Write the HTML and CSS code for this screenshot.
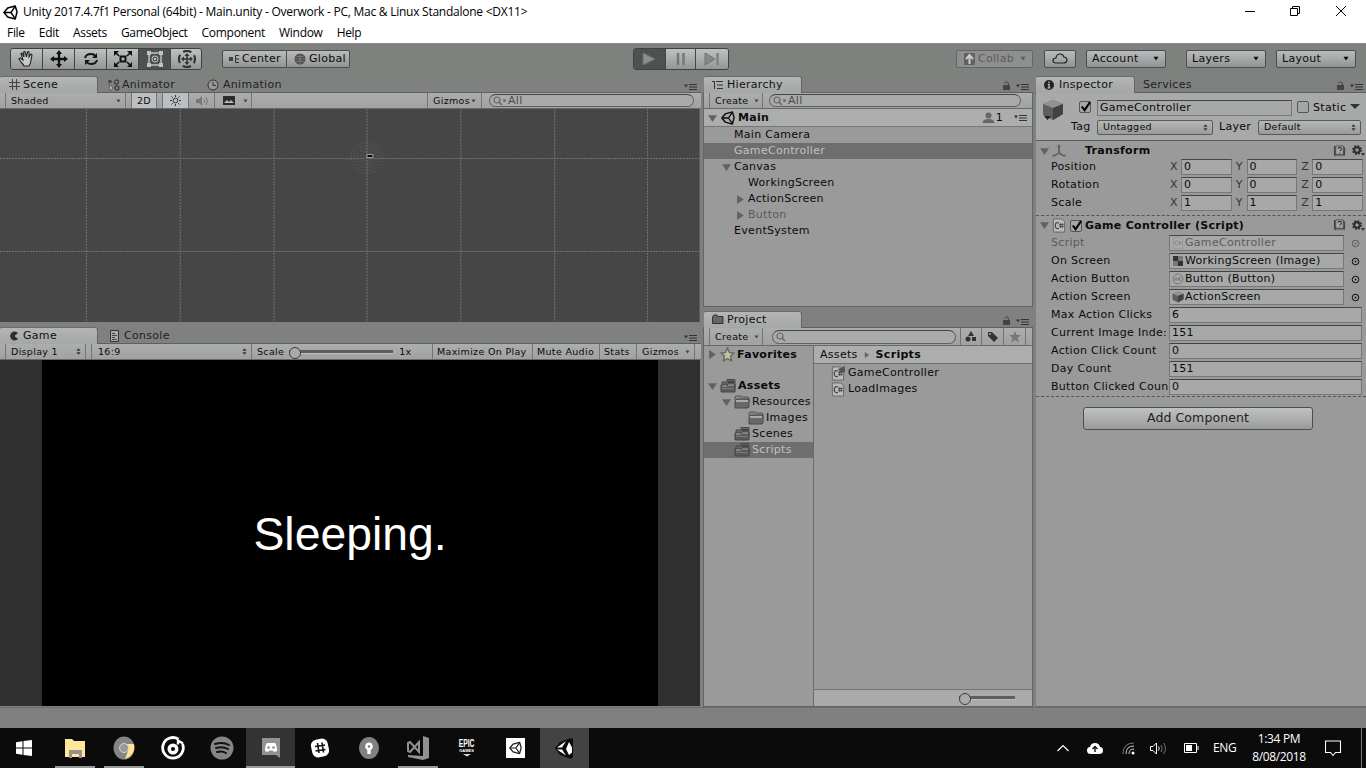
FILE: index.html
```html
<!DOCTYPE html>
<html lang="en">
<head>
<meta charset="utf-8">
<title>Unity 2017.4.7f1 Personal</title>
<link rel="stylesheet" href="styles.css">
</head>
<body>
<svg class="defs" aria-hidden="true">
  <symbol id="unity" viewBox="0 0 16 16"><path d="M1 8 5 3.2 13 1l2 6.500-2 7.500-8-2.200z" fill="none" stroke="currentColor" stroke-width="1.600" stroke-linejoin="round"/><path d="M2 8h6.500M8.500 8 13 1.500M8.500 8l4.500 6.500" fill="none" stroke="currentColor" stroke-width="1.500"/></symbol>
  <symbol id="down" viewBox="0 0 8 8"><path d="M0 1h8L4 7z" fill="currentColor"/></symbol>
  <symbol id="right" viewBox="0 0 8 8"><path d="M1 0v8l6-4z" fill="currentColor"/></symbol>
  <symbol id="updown" viewBox="0 0 6 8"><path d="M.5 3 3 0l2.500 3zM.5 5 3 8l2.500-3z" fill="currentColor"/></symbol>
  <symbol id="opts" viewBox="0 0 14 8"><path d="M0 1.500h4L2 4.500z" fill="currentColor"/><path d="M5 1.500h8M5 4h8M5 6.500h8" stroke="currentColor" stroke-width="1.200"/></symbol>
  <symbol id="lock" viewBox="0 0 8 10"><path d="M1 4h7v5H1z" fill="currentColor"/><path d="M2.500 2.500Q3 .8 4.800.8T6.500 4" fill="none" stroke="currentColor"/></symbol>
  <symbol id="search" viewBox="0 0 14 10"><circle cx="4" cy="4" r="3" fill="none" stroke="currentColor" stroke-width="1.200"/><path d="m6 6 3 3" stroke="currentColor" stroke-width="1.500"/></symbol>
  <symbol id="folder" viewBox="0 0 16 14"><path d="M1 5V2l1-1h5l1 1h6l1 1v4z" fill="#8b8b8b" stroke="#555"/><path d="M3 4h12v8l-1 1H1V6z" fill="#686868" stroke="#4b4b4b"/><path d="M2 5h12v2H2z" fill="#aaa"/></symbol>
  <symbol id="folderfull" viewBox="0 0 16 14"><path d="M2 5V3h5V.5h8V10H2z" fill="#666" stroke="#484848"/><path d="M8 2h6v2H8z" fill="#444"/><path d="M1 6h6l1-1h7v8H1z" fill="#5c5c5c" stroke="#454545"/><path d="M2 7h5M8 6h6" stroke="#aaa" stroke-width="1.200"/><path d="M2 9.500h12" stroke="#777"/></symbol>
  <symbol id="cs" viewBox="0 0 14 16"><path d="M1 1h9l3 3v11H1z" fill="#b9b9b9" stroke="#666"/><path d="M7 5.300Q3 4 3 8t4 3.200" fill="none" stroke="#444" stroke-width="1.300"/><path d="M7 7h5M7 9.200h5M8.500 5.500v5M10.500 5.500v5" stroke="#444" stroke-width=".9"/></symbol>
  <symbol id="book" viewBox="0 0 14 14"><path d="M1 1h10l2 2v10H4l-3-2z" fill="#444"/><path d="M3 1h8v9H3z" fill="#aaa" stroke="#555"/><path d="M5.500 4q0-1.500 1.700-1.500T9 4 7.200 6.500M7.200 8v1" fill="none" stroke="#333" stroke-width="1.200"/><path d="M3 12h10" stroke="#ccc"/></symbol>
  <symbol id="gear" viewBox="0 0 14 12"><circle cx="5" cy="5" r="2.800" fill="none" stroke="#2c2c2c" stroke-width="2"/><circle cx="5" cy="5" r="4.200" fill="none" stroke="#2c2c2c" stroke-width="1.600" stroke-dasharray="1.700 1.600"/><path d="M9 8h4l-2 3z" fill="#333"/></symbol>
  <symbol id="cube" viewBox="0 0 22 22"><path d="m11 1 10 4v10l-10 6L1 16V5z" fill="#5e5e5e"/><path d="m1 5 10-4 10 4-10 4z" fill="#929292"/><path d="m11 9 10-4v10l-10 6z" fill="#414141"/></symbol>
  <symbol id="target" viewBox="0 0 9 9"><circle cx="4.500" cy="4.500" r="3.300" fill="none" stroke="currentColor"/><path d="M3.700 3.700h1.600v1.600H3.700z" fill="currentColor"/></symbol>
  <symbol id="tick" viewBox="0 0 14 14"><path d="m3 7 3 4 6-9" fill="none" stroke="#000" stroke-width="2.200"/></symbol>
</svg>

<header class="titlebar">
  <svg class="logo"><use href="#unity"/></svg>
  <span class="title">Unity 2017.4.7f1 Personal (64bit) - Main.unity - Overwork - PC, Mac &amp; Linux Standalone &lt;DX11&gt;</span>
  <svg class="winctl" viewBox="0 0 104 14" fill="none" stroke="#000"><path d="M0 7.500h10M45.500 4.500h7v7h-7zM47.500 4.500v-2h7v7h-2M91 2l10 10M101 2 91 12"/></svg>
</header>
<nav class="menu"><span>File</span><span>Edit</span><span>Assets</span><span>GameObject</span><span>Component</span><span>Window</span><span>Help</span></nav>

<div class="toolbar">
  <div class="tools">
    <span class="tool"><svg width="20" height="18" viewBox="0 0 20 18"><path d="M7 16q-1-2-3-4L2 9q0-1 1-1l3 2-2-6q0-1 1-1l2 4-.3-5q1-1 1.500 0L9.500 7l1-5q1-1 1.500 0v5l2-3q1 0 1 1l-1 5q0 3-2 6z" fill="#c7c9cb" stroke="#222" stroke-width="1.100"/></svg></span>
    <span class="tool"><svg width="18" height="18" viewBox="0 0 18 18"><path d="M9 2v14M2 9h14" stroke="#111" stroke-width="2.300"/><path d="m9 0 3 4H6zM9 18l3-4H6zM0 9l4-3v6zM18 9l-4-3v6z" fill="#111"/></svg></span>
    <span class="tool"><svg width="18" height="18" viewBox="0 0 18 18" fill="none" stroke="#151515" stroke-width="2"><path d="M3 8q1-4 6-4 3 0 4.500 2M15 10q-1 4-6 4-3 0-4.500-2"/><path d="M15 3v5h-5zM3 15v-5h5z" fill="#151515" stroke="none"/></svg></span>
    <span class="tool"><svg width="18" height="18" viewBox="0 0 18 18"><path d="M6.500 6.500h5v5h-5z" fill="none" stroke="#111" stroke-width="2"/><path d="m2 3 3 3M16 3l-3 3M2 15l3-3M16 15l-3-3" stroke="#111" stroke-width="1.600"/><path d="M0 1h5L0 6zM18 1h-5l5 5zM0 17h5l-5-5zM18 17h-5l5-5z" fill="#111"/></svg></span>
    <span class="tool on"><svg width="18" height="18" viewBox="0 0 18 18" fill="none" stroke="#c0c2c3"><path d="M3 3h12v12H3z" stroke-width="1.500"/><circle cx="9" cy="9" r="3"/><path d="M1 1h4v4H1zM13 1h4v4h-4zM1 13h4v4H1zM13 13h4v4h-4zM8 8h2v2H8z" fill="#c0c2c3" stroke="none"/></svg></span>
    <span class="tool"><svg width="20" height="18" viewBox="0 0 20 18"><circle cx="10" cy="9" r="8" fill="none" stroke="#333" stroke-width="2.200" stroke-dasharray="8.500 4.070" stroke-dashoffset="4.200"/><path d="M10 5v8M6 9h8" stroke="#333" stroke-width="1.500"/><path d="m10 3 2.500 3h-5zM10 15l2.500-3h-5zM4 9l3-2.500v5zM16 9l-3-2.500v5z" fill="#333"/></svg></span>
  </div>
  <div class="pivot">
    <span class="btn center"><svg width="10" height="8" viewBox="0 0 10 8"><path d="M0 2h4v4H0z" fill="#444"/><path d="M10 .5H6.500v7H10M6 4h4" fill="none" stroke="#333"/></svg>Center</span>
    <span class="btn global"><svg width="12" height="12" viewBox="0 0 12 12"><circle cx="6" cy="6" r="5.500" fill="#4c4c4c"/><path d="M1 6h10M6 1v10M2 3q4 2 8 0M2 9q4-2 8 0" stroke="#999" fill="none" stroke-width=".6"/></svg>Global</span>
  </div>
  <div class="play">
    <span class="on"><svg width="16" height="14" viewBox="0 0 16 14"><path d="m2 1 12 6-12 6z" fill="#8d8f8f" stroke="#707272"/></svg></span>
    <span><svg width="12" height="14" viewBox="0 0 12 14"><path d="M3 1v12M8.500 1v12" stroke="#777" stroke-width="2.500"/></svg></span>
    <span><svg width="18" height="14" viewBox="0 0 18 14"><path d="m2 1 10 6-10 6z" fill="#888" stroke="#707272"/><path d="M14.500 1v12" stroke="#808282" stroke-width="2.500"/></svg></span>
  </div>
  <span class="btn collab"><svg width="11" height="12" viewBox="0 0 11 12"><path d="M0 1q0-1 1-1h9q1 0 1 1v10q0 1-1 1H1q-1 0-1-1z" fill="#606262"/><path d="M5.500 11V3M2 6l3.500-4L9 6" fill="none" stroke="#ccc" stroke-width="2"/></svg>Collab<svg class="c6"><use href="#down"/></svg></span>
  <span class="btn cloud"><svg width="16" height="11" viewBox="0 0 16 11"><path d="M4 10q-3 0-3-2.500T4 5q.5-4 4-4 3 0 4 3 3 .5 3 3t-3 3z" fill="none" stroke="#222" stroke-width="1.200"/></svg></span>
  <span class="btn account">Account<svg class="c6"><use href="#down"/></svg></span>
  <span class="btn layers">Layers<svg class="c6"><use href="#down"/></svg></span>
  <span class="btn layout">Layout<svg class="c6"><use href="#down"/></svg></span>
</div>

<main class="workspace">
  <section class="col left">
    <div class="panel scene">
      <div class="tabs">
        <span class="tab active"><svg width="12" height="12" viewBox="0 0 12 12"><path d="M3.500 0v11M7.500 0v11M0 3.500h11M0 7.500h11" stroke="#444" fill="none"/></svg>Scene</span>
        <span class="tab t-animator"><svg width="12" height="12" viewBox="0 0 12 12"><circle cx="2" cy="2.500" r="1.800" fill="#444"/><circle cx="8.500" cy="3" r="2" fill="none" stroke="#444" stroke-width="1.300"/><circle cx="9" cy="9" r="2" fill="none" stroke="#444" stroke-width="1.300"/><path d="m1 5 4 4-3 3z" fill="#bbb" stroke="#555" stroke-width=".8"/></svg>Animator</span>
        <span class="tab t-animation"><svg width="12" height="12" viewBox="0 0 12 12"><circle cx="6" cy="6" r="5" fill="#999" stroke="#333"/><path d="M6 3v3.500h3" fill="none" stroke="#333"/></svg>Animation</span>
        <svg class="opts"><use href="#opts"/></svg>
      </div>
      <div class="bar">
        <span class="cell shaded">Shaded<svg class="c5"><use href="#down"/></svg></span>
        <span class="cell two lit">2D</span>
        <span class="cell sun lit"><svg width="13" height="13" viewBox="0 0 13 13"><circle cx="6.500" cy="6.500" r="2.300" fill="none" stroke="#333"/><path d="M6.500 1v2M6.500 10v2M1 6.500h2M10 6.500h2M2.500 2.500l1.300 1.300M10.500 2.500 9.200 3.800M2.500 10.500l1.300-1.300M10.500 10.500 9.200 9.200" stroke="#333"/></svg></span>
        <span class="cell snd"><svg width="14" height="12" viewBox="0 0 14 12"><path d="M1 4h3l3-3v10L4 8H1z" fill="#777"/><path d="M9 4q1.500 2 0 4M11 2q3 4 0 8" fill="none" stroke="#777"/></svg></span>
        <span class="cell img"><svg width="12" height="9" viewBox="0 0 12 9"><path d="M0 0h12v9H0z" fill="#2c2c2c"/><path d="m1 7 3-3 2 2 2-2 3 3z" fill="#bbb"/></svg></span>
        <span class="cell imgdd"><svg class="c5"><use href="#down"/></svg></span>
        <span class="cell giz">Gizmos<svg class="c5"><use href="#down"/></svg></span>
        <span class="find f1"><svg class="mag"><use href="#search"/></svg><svg class="c5"><use href="#down"/></svg>All</span>
      </div>
      <svg class="view" width="700" height="213" viewBox="0 109 700 213"><path d="M86.500 109v213M180.500 109v213M274.500 109v213M367.500 109v213M461.500 109v213M555.500 109v213M648.500 109v213M0 158.500h700M0 251.500h700" stroke="#747474" stroke-dasharray="2 1"/><g fill="none" stroke="#6a6a6a" stroke-dasharray="1 2"><circle cx="367.500" cy="158" r="16"/><circle cx="367.500" cy="158" r="13"/><circle cx="367.500" cy="158" r="10"/><circle cx="367.500" cy="158" r="7"/><circle cx="367.500" cy="158" r="4"/></g><path d="M367.500 154.500h6v3h-6z" fill="#000" stroke="#aaa"/></svg>
    </div>
    <div class="panel game">
      <div class="tabs">
        <span class="tab active"><svg width="12" height="12" viewBox="0 0 12 12"><path d="M9 3A4.500 4.500 0 1 0 9 9L5.500 6z" fill="#2d2d2d"/></svg>Game</span>
        <span class="tab t-console"><svg width="10" height="12" viewBox="0 0 10 12"><path d="M.5.500h8v11h-8z" fill="#aaa" stroke="#333"/><path d="M2 3.500h3M2 5.500h5M2 7.500h3M2 9.500h5" stroke="#444"/></svg>Console</span>
        <svg class="opts"><use href="#opts"/></svg>
      </div>
      <div class="bar">
        <span class="cell disp">Display 1<svg class="ud"><use href="#updown"/></svg></span>
        <span class="cell ratio">16:9<svg class="ud"><use href="#updown"/></svg></span>
        <span class="cell scale">Scale<span class="slider"></span>1x</span>
        <span class="cell max">Maximize On Play</span>
        <span class="cell mute">Mute Audio</span>
        <span class="cell stats">Stats</span>
        <span class="cell giz2">Gizmos<svg class="c5"><use href="#down"/></svg></span>
      </div>
      <div class="gameview"><div class="stage">Sleeping.</div></div>
    </div>
  </section>

  <section class="col mid">
    <div class="panel hier">
      <div class="tabs">
        <span class="tab active"><svg width="12" height="10" viewBox="0 0 12 10"><path d="M0 1.500h3M2.500 2v7M4 1.500h7M5 5h6M5 8.500h6" stroke="#333" fill="none"/></svg>Hierarchy</span>
        <svg class="lock"><use href="#lock"/></svg><svg class="opts"><use href="#opts"/></svg>
      </div>
      <div class="bar">
        <span class="cell create">Create<svg class="c5"><use href="#down"/></svg></span>
        <span class="find f2"><svg class="mag"><use href="#search"/></svg><svg class="c5"><use href="#down"/></svg>All</span>
      </div>
      <div class="row root"><svg class="fold"><use href="#down"/></svg><svg class="rootlogo"><use href="#unity"/></svg><b>Main</b><svg class="user" viewBox="0 0 12 12"><circle cx="6" cy="3.500" r="3" fill="#666"/><path d="M0 11q0-4 6-4t6 4z" fill="#666"/></svg>1<svg class="opts"><use href="#opts"/></svg></div>
      <div class="row d1">Main Camera</div>
      <div class="row d1 sel">GameController</div>
      <div class="row d1f"><svg class="fold"><use href="#down"/></svg>Canvas</div>
      <div class="row d2">WorkingScreen</div>
      <div class="row d2f"><svg class="fold"><use href="#right"/></svg>ActionScreen</div>
      <div class="row d2f dim"><svg class="fold"><use href="#right"/></svg>Button</div>
      <div class="row d1">EventSystem</div>
    </div>
    <div class="panel proj">
      <div class="tabs">
        <span class="tab active"><svg width="12" height="11" viewBox="0 0 12 11"><path d="M.5 2.500 2 1h3l1 1.500h5v7H.5z" fill="#666" stroke="#333"/></svg>Project</span>
        <svg class="lock"><use href="#lock"/></svg><svg class="opts"><use href="#opts"/></svg>
      </div>
      <div class="bar">
        <span class="cell create">Create<svg class="c5"><use href="#down"/></svg></span>
        <span class="find f3"><svg class="mag"><use href="#search"/></svg></span>
        <span class="cell pi"><svg width="12" height="11" viewBox="0 0 12 11"><path d="m6 0 3 5H3z" fill="#333"/><circle cx="3" cy="8" r="2.500" fill="#333"/><path d="M7 6h4v4H7z" fill="#333"/></svg></span>
        <span class="cell pi"><svg width="12" height="12" viewBox="0 0 12 12"><path d="M1 1h4l6 6-4 4-6-6z" fill="#333"/><circle cx="3" cy="3" r="1" fill="#aaa"/></svg></span>
        <span class="cell pi"><svg width="12" height="12" viewBox="0 0 12 12"><path d="m6 0 1.600 4H12L8.500 7 10 11.500 6 9l-4 2.500L3.500 7 0 4h4.400z" fill="#777"/></svg></span>
      </div>
      <div class="split">
        <div class="tree">
          <div class="row fav"><svg class="fold"><use href="#right"/></svg><svg class="star" viewBox="0 0 15 15"><path d="m7.500 1 2 4.500 4.500.5-3.500 3 1 5-4-2.500-4 2.500 1-5L1 6l4.500-.5z" fill="#c9c39c" stroke="#666" stroke-width="1.400"/></svg><b>Favorites</b></div>
          <div class="row"><svg class="fold"><use href="#down"/></svg><svg class="fo"><use href="#folderfull"/></svg><b>Assets</b></div>
          <div class="row p1"><svg class="fold"><use href="#down"/></svg><svg class="fo"><use href="#folder"/></svg>Resources</div>
          <div class="row p2"><svg class="fo"><use href="#folder"/></svg>Images</div>
          <div class="row p3"><svg class="fo"><use href="#folderfull"/></svg>Scenes</div>
          <div class="row p3 sel"><svg class="fo"><use href="#folderfull"/></svg>Scripts</div>
        </div>
        <div class="files">
          <div class="crumb">Assets<svg class="cr"><use href="#right"/></svg><b>Scripts</b></div>
          <div class="row file"><svg class="csi"><use href="#cs"/><path d="M7 3 14 0v6l-4 1z" fill="#555"/></svg>GameController</div>
          <div class="row file"><svg class="csi"><use href="#cs"/></svg>LoadImages</div>
          <div class="foot"><span class="slider small"></span></div>
        </div>
      </div>
    </div>
  </section>

  <section class="col insp">
    <div class="tabs">
      <span class="tab active"><svg width="10" height="10" viewBox="0 0 10 10"><circle cx="5" cy="5" r="5" fill="#222"/><path d="M5 1.500v1.700M3.800 4.500H5V8M3.500 8h3" stroke="#ccc" stroke-width="1.200" fill="none"/></svg>Inspector</span>
      <span class="tab t-services">Services</span>
      <svg class="lock"><use href="#lock"/></svg><svg class="opts"><use href="#opts"/></svg>
    </div>
    <div class="head">
      <div class="hl"><svg class="bigcube" viewBox="0 0 22 22"><use href="#cube"/><path d="M2 17h7l-3.500 4z" fill="#222"/></svg><span class="chk"><svg><use href="#tick"/></svg></span><span class="field name">GameController</span><span class="chk empty"></span><span class="static">Static</span><svg class="sdown" viewBox="0 0 10 6"><path d="M0 0h10L5 5z" fill="#333"/></svg></div>
      <div class="tl"><span class="lab">Tag</span><span class="pop tag">Untagged<svg class="ud"><use href="#updown"/></svg></span><span class="lab2">Layer</span><span class="pop lay">Default<svg class="ud"><use href="#updown"/></svg></span></div>
    </div>
    <div class="comp transform">
      <div class="ch"><svg class="fold"><use href="#down"/></svg><svg class="axis" viewBox="0 0 14 14"><path d="M7 1v8l-5 3M7 9l5 3" fill="none" stroke="#666" stroke-width="2"/><path d="m7 0 2 3H5zM0 13l1-3 2 2zM14 13l-1-3-2 2z" fill="#666"/></svg><b class="tname">Transform</b><svg class="book"><use href="#book"/></svg><svg class="gear"><use href="#gear"/></svg></div>
      <div class="vec"><span class="pl">Position</span><i>X</i><span class="field">0</span><i>Y</i><span class="field">0</span><i>Z</i><span class="field">0</span></div>
      <div class="vec"><span class="pl">Rotation</span><i>X</i><span class="field">0</span><i>Y</i><span class="field">0</span><i>Z</i><span class="field">0</span></div>
      <div class="vec"><span class="pl">Scale</span><i>X</i><span class="field">1</span><i>Y</i><span class="field">1</span><i>Z</i><span class="field">1</span></div>
    </div>
    <div class="comp script">
      <div class="ch"><svg class="fold"><use href="#down"/></svg><svg class="csh"><use href="#cs"/></svg><span class="chk"><svg><use href="#tick"/></svg></span><b>Game Controller (Script)</b><svg class="book"><use href="#book"/></svg><svg class="gear"><use href="#gear"/></svg></div>
      <div class="prop dim"><span class="pl">Script</span><span class="field obj"><svg><use href="#cs" opacity=".35"/></svg>GameController</span><svg class="tg"><use href="#target"/></svg></div>
      <div class="prop"><span class="pl">On Screen</span><span class="field obj"><svg viewBox="0 0 12 12"><path d="M1 1h10v10H1z" fill="#777"/><path d="M1 1h5v5H1zM6 6h5v5H6z" fill="#333"/></svg>WorkingScreen (Image)</span><svg class="tg"><use href="#target"/></svg></div>
      <div class="prop"><span class="pl">Action Button</span><span class="field obj"><svg viewBox="0 0 12 12"><circle cx="6" cy="6" r="5" fill="#aaa" stroke="#777"/><circle cx="4" cy="6" r="1.300" fill="none" stroke="#777"/><path d="M7 4v4M9.500 4 7 6l2.500 2" fill="none" stroke="#777"/></svg>Button (Button)</span><svg class="tg"><use href="#target"/></svg></div>
      <div class="prop"><span class="pl">Action Screen</span><span class="field obj"><svg><use href="#cube"/></svg>ActionScreen</span><svg class="tg"><use href="#target"/></svg></div>
      <div class="prop"><span class="pl">Max Action Clicks</span><span class="field">6</span></div>
      <div class="prop"><span class="pl">Current Image Inde:</span><span class="field">151</span></div>
      <div class="prop"><span class="pl">Action Click Count</span><span class="field">0</span></div>
      <div class="prop"><span class="pl">Day Count</span><span class="field">151</span></div>
      <div class="prop"><span class="pl">Button Clicked Coun</span><span class="field">0</span></div>
    </div>
    <div class="add">Add Component</div>
  </section>
</main>
<div class="status"></div>

<footer class="taskbar">
  <span class="app start"><svg width="16" height="16" viewBox="0 0 16 16"><path d="M0 2.300 6.500 1.300v6.200H0zM7.500 1.100 16 0v7.500H7.500zM0 8.500h6.500v6.200L0 13.700zM7.500 8.500H16V16l-8.500-1.100z" fill="#fff"/></svg></span>
  <span class="app run"><svg width="22" height="22" viewBox="0 0 22 22"><path d="M1 2h7l2 2h11v16H1z" fill="#ffe79a"/><path d="M5 21v-8h13v8h-3v-4H8v4z" fill="#929292"/></svg></span>
  <span class="app run"><svg width="22" height="24" viewBox="0 0 22 24"><ellipse cx="11" cy="12" rx="10.500" ry="11.500" fill="#858585"/><path d="M14 8h7q2 11-9 15l3-8z" fill="#ffe391"/><circle cx="11" cy="12" r="4.500" fill="#999" stroke="#d5d5d5"/></svg></span>
  <span class="app"><svg width="24" height="24" viewBox="0 0 24 24" fill="none" stroke="#fff"><path d="M17.500 3.200A10.300 10.300 0 1 0 21.500 8" stroke-width="2.800"/><circle cx="12" cy="13" r="3.800" stroke-width="3.400"/><path d="M17 3.500v5M17 4.500l5 3" stroke-width="2.400"/></svg></span>
  <span class="app"><svg width="24" height="24" viewBox="0 0 24 24"><circle cx="12" cy="12" r="11.500" fill="#858585"/><path d="M5 8q8-2.500 14 1M6 12q7-2 12 1M7 16q5-1.500 9 1" fill="none" stroke="#111" stroke-width="2" stroke-linecap="round"/></svg></span>
  <span class="app run hot"><svg width="20" height="22" viewBox="0 0 20 22"><path d="M1 1h18v20l-4-3H1z" fill="#929292"/><path d="M4 14q0-6 2-8h8q2 2 2 8l-3 1-1-1.500H8L7 15z" fill="#fff"/><circle cx="7.500" cy="10.500" r="1.300" fill="#888"/><circle cx="12.500" cy="10.500" r="1.300" fill="#888"/></svg></span>
  <span class="app"><svg width="20" height="22" viewBox="0 0 20 22"><rect x="1.500" y="2" width="17" height="18" rx="6" fill="#fff" transform="rotate(-12 10 11)"/><path d="m7.500 6 1.500 10M12 5.500l1.500 10M5 9.500l10-1.500M5.500 14l10-1.500" stroke="#111" stroke-width="1.600"/></svg></span>
  <span class="app"><svg width="20" height="22" viewBox="0 0 20 22"><ellipse cx="10" cy="11" rx="10" ry="11" fill="#808282"/><path d="M10 5.500a4 4 0 0 0-1.700 7.500v4h3.400v-4A4 4 0 0 0 10 5.500z" fill="#fff"/><circle cx="10" cy="9.500" r="1.200" fill="#777"/></svg></span>
  <span class="app run"><svg width="24" height="24" viewBox="0 0 24 24"><path d="m17 0 6 2v20l-6 2-15-3v-2l15 1z" fill="#929292"/><path d="m2 7 2-1 9 10V6L4 16l-2-1z" fill="none" stroke="#929292" stroke-width="2"/></svg></span>
  <span class="app epic"><strong>EPIC</strong><small>GAMES</small><svg width="8" height="3" viewBox="0 0 8 3"><path d="M0 0h8L4 2.500z" fill="#ddd"/></svg></span>
  <span class="app"><span class="unitybox"><svg width="13" height="14"><use href="#unity"/></svg></span></span>
  <span class="app hot cur"><svg width="20" height="21" viewBox="0 0 20 21"><path d="m0 10 5-6 11-4 2 1v18l-2 2-11-4z" fill="#0c0c0c"/><path d="M2 9.500 11 3l-4 6.500zM2 11.500l9 6-4-6zM14 4l3 5.500v5L14 17l-3-6z" fill="#fff"/></svg></span>
  <div class="tray">
    <svg width="12" height="8" viewBox="0 0 12 8"><path d="m.5 7 5.500-5.500L11.500 7" fill="none" stroke="#fff" stroke-width="1.200"/></svg>
    <svg class="t2" width="16" height="11" viewBox="0 0 16 11"><path d="M4 11q-4 0-4-3.500T3 4q1-4 5-4t5 4q3 0 3 3.500T12 11z" fill="#fff"/><path d="M8 9V4M5.500 6 8 3.500 10.500 6" fill="none" stroke="#111" stroke-width="1.400"/></svg>
    <svg class="t3" width="13" height="13" viewBox="0 0 13 13" fill="none" stroke="#ccc"><path d="M1 12Q1 1 12 1" stroke="#777"/><path d="M4 12q0-8 8-8M7 12q0-5 5-5"/><circle cx="11" cy="11" r="1.500" fill="#fff" stroke="none"/></svg>
    <svg class="t4" width="17" height="13" viewBox="0 0 17 13" fill="none" stroke="#fff"><path d="M.5 4.500H3L6.500 1v11L3 8.500H.5zM8.500 4.500q1.500 2 0 4"/><path d="M11 3q2.500 3.500 0 7M13.500 1q4 5.500 0 11" stroke="#777"/></svg>
    <svg class="t5" width="15" height="10" viewBox="0 0 15 10"><path d="M.5.500h12v9H.5zM14 3v4" fill="none" stroke="#fff"/><path d="M2 2h6v6H2z" fill="#fff"/></svg>
    <span class="eng">ENG</span>
    <span class="clock"><span class="time">1:34 PM</span><span>8/08/2018</span></span>
    <svg class="t6" width="17" height="17" viewBox="0 0 17 17"><path d="M.5 1h15v11.500h-5L8 15.500l-2.500-3h-5z" fill="none" stroke="#fff" stroke-width="1.100"/></svg>
    <span class="edge"></span>
  </div>
</footer>
</body>
</html>
```
FILE: styles.css
```css
*{box-sizing:border-box}
body{margin:0;width:1366px;height:768px;overflow:hidden;display:flex;flex-direction:column;background:#7f817f;font:11px/16px "DejaVu Sans",sans-serif;letter-spacing:.3px;color:#0b0b0b;white-space:nowrap}
svg{display:block;flex:none}
b{font-weight:700}
.defs{position:absolute;width:0;height:0}

.titlebar{height:24px;background:#fff;display:flex;align-items:center;padding-left:3px;font:12px/24px "Open Sans",sans-serif;letter-spacing:-.25px;color:#000}
.logo{width:15px;height:15px;margin-right:5px}
.winctl{width:104px;height:14px;margin-left:auto;margin-right:17px;margin-top:-3px}
.menu{height:19px;background:#fff;font:12px/18px "Open Sans",sans-serif;letter-spacing:-.3px;color:#000;display:flex;gap:14px;padding-left:7px}

.toolbar{height:33px;display:flex;align-items:center;border-top:1px solid #8a8b8a;padding:0 10px 3px 10px}
.tools,.pivot,.play{display:flex}
.tools,.play{height:22px;border:1px solid #404141;border-radius:3px;overflow:hidden}
.tool,.play span{width:32px;display:flex;align-items:center;justify-content:center;background:linear-gradient(#bec1c3,#959696);border-right:1px solid #454646}
.tool:last-child,.play span:last-child{border:0}
.tools .on,.play .on{background:#4f5050}
.tools{width:192px}
.pivot{margin-left:20px}
.btn{height:18px;border:1px solid #4c4d4d;border-radius:2px;background:linear-gradient(#b8bbbc,#939494);display:flex;align-items:center;padding:0 6px}
.center{width:65px;border-radius:2px 0 0 2px;gap:3px}
.global{width:63px;border-radius:0 2px 2px 0;border-left:0;gap:3px;padding-left:7px}
.play{width:96px;margin-left:283px}
.play span:nth-child(2){width:31px}
.collab{width:77px;margin-left:227px;color:#5b5c5c;border-color:#646565;background:#8e8f8f;gap:3px;padding-left:7px}
.c6{width:6px;height:5px;margin-left:auto}
.collab .c6{margin-left:3px}
.cloud{width:32px;margin-left:11px;justify-content:center}
.account{width:80px;margin-left:10px;padding-left:5px}
.layers{width:80px;margin-left:20px;padding-left:5px}
.layout{width:80px;margin-left:10px;padding-left:5px}
.btn,.tool{flex:none}

.workspace{height:631px;display:flex}
.col{display:flex;flex-direction:column}
.left{width:701px;margin-right:2px}
.mid{width:330px;margin-right:3px}
.panel{display:flex;flex-direction:column}
.tabs{height:17px;display:flex;align-items:center;border-bottom:1px solid #5e5f5e;color:#222}
.tab{height:16px;display:flex;align-items:center;gap:2px;padding-left:9px;padding-top:1px}
.tab.active{width:98px;background:linear-gradient(#b3b5b6,#a5a6a6);border-right:1px solid #636463;border-top:1px solid #6b6c6b;border-radius:2px 3px 0 0;color:#111;height:17px;padding-top:0}
.t-animator{width:98px;padding-left:10px}
.t-animation{padding-left:11px;gap:4px}
.t-console{padding-left:12px;gap:4px}
.opts{width:14px;height:8px;color:#333;margin-left:auto;margin-right:3px;margin-top:5px}
.lock{width:8px;height:10px;color:#444;margin-left:auto;margin-top:3px}
.lock + .opts{margin-left:6px}
.bar{height:16px;display:flex;align-items:center;background:linear-gradient(#acadad,#a0a1a1);border-bottom:1px solid #686968;font-size:9.500px;line-height:15px;letter-spacing:.32px}
.cell{height:15px;border-right:1px solid #737473;display:flex;align-items:center;padding:0 5px}
.c5{width:5px;height:4px;color:#444;margin-left:auto}
.ud{width:5px;height:7px;color:#333;margin-left:auto}
.lit{background:#bcbfc1}
.shaded{width:121px;margin-left:5px;border-left:1px solid #737473;padding:0 4px 0 5px}
.two{width:26px;margin-left:5px;border-left:1px solid #737473;padding:0 0 0 5px}
.sun{width:27px;margin-left:5px;border-left:1px solid #737473;padding:0;justify-content:center}
.snd{width:26px;justify-content:center}
.img{width:27px;padding:0;border:0;justify-content:center}
.imgdd{width:10px;padding:0 3px 0 0}
.giz{width:55px;margin-left:175px;border-left:1px solid #737473}
.find{height:13px;border:1px solid #606160;border-top-color:#444;border-radius:7px;background:#a9aaaa;color:#4a4a4a;display:flex;align-items:center;font-size:11px}
.mag{width:14px;height:10px;margin-left:3px;color:#666}
.find .c5{margin-left:-5px;margin-right:1px;color:#666}
.f1{width:205px;margin-left:7px}
.scene{height:251px}
.view{background:#464646;border-right:1px solid #5d5d5d}
.game .disp{width:81px;margin-left:5px;border-left:1px solid #737473;padding:0 4px 0 5px}
.ratio{width:161px;margin-left:5px;border-left:1px solid #737473;padding:0 4px 0 6px}
.scale{width:181px;padding-left:5px}
.slider{width:104px;height:9px;margin:0 6px 0 5px;background:linear-gradient(transparent 3px,#5c5d5c 3px 6px,#bcbdbd 6px 7px,transparent 7px);position:relative}
.slider::before{content:"";position:absolute;left:0;top:0;width:10px;height:10px;border:1px solid #3e3e3e;border-radius:50%;background:#a9aaaa}
.max{width:100px;padding-left:4px}.mute{width:67px;padding:0 4px}.stats{width:37px;padding-left:4px}.giz2{width:58px;padding-right:4px}
.gameview{height:346px;width:700px;background:#302f30;display:flex;justify-content:center}
.stage{width:616px;background:#000;color:#fff;font:46.300px/348px "Liberation Sans",sans-serif;letter-spacing:0;text-align:center}

.hier,.proj{width:330px;background:#9a9a9a;border:1px solid #636463;border-top:0}
.hier{height:231px;margin-bottom:4px}
.proj{height:396px}
.mid .tabs,.insp .tabs{background:#7f817f;margin:0 -1px;padding-left:1px}
.mid .tab{padding-left:8px;gap:3px}
.row{height:16px;display:flex;align-items:center}
.fold{width:9px;height:9px;color:#626262}
.root{height:18px;background:#acadad;border-bottom:1px solid #777;padding:1px 0 0 4px}
.rootlogo{width:14px;height:14px;margin:0 3px 0 4px}
.user{width:13px;height:12px;margin:0 1px 0 auto}
.root .opts{margin:0 4px 0 11px}
.create{width:54px;margin-left:5px;border-left:1px solid #737473;padding:0 3px 0 5px}
.f2{width:252px;margin-left:6px}
.d1{padding-left:30px}.d1f{padding-left:18px}.d1f .fold{margin-right:3px}
.d2{padding-left:44px}.d2f{padding-left:32px}.d2f .fold{margin-right:3px}
.sel{background:#6d6e6d;color:#c0c1c1}
.dim{color:#5b5b5b}
.proj .bar{height:18px;line-height:17px}
.proj .cell{height:17px}
.f3{width:184px;height:14px;margin-left:9px;margin-right:4px}
.pi{width:22px;padding:0;justify-content:center}
.f3 + .pi{border-left:1px solid #737473}
.split{display:flex;height:361px}
.tree{width:110px;border-right:1px solid #6a6b6a;overflow:hidden}
.tree .row{padding-left:4px}
.tree .fav{margin-bottom:15px;height:17px}
.star{width:15px;height:15px;margin:0 2px 0 3px}
.fo{width:16px;height:14px;margin:0 2px 0 3px}
.tree .p1{padding-left:18px}.tree .p2{padding-left:41px}.tree .p3{padding-left:27px}
.files{flex:1;display:flex;flex-direction:column}
.crumb{height:18px;background:#acadad;border-bottom:1px solid #6c6d6c;display:flex;align-items:center;padding-left:6px}
.cr{width:6px;height:6px;margin:0 6px 0 6px;color:#666}
.file{padding-left:17px}
.files .file:nth-child(2){margin-top:1px}
.csi{width:14px;height:15px;margin-right:3px}
.foot{margin-top:auto;height:17px;background:#a9aaaa;border-top:1px solid #737473;display:flex;align-items:center;justify-content:flex-end;padding:0 11px 2px 0}
.small{width:56px}

.insp{width:330px;background:#9a9a9a;border-bottom:1px solid #686968}
.insp .tab.active{padding-left:8px;gap:5px;width:99px}
.insp .tab.t-services{padding-left:8px}
.insp .tabs{flex:none}
.head{height:48px;background:#a8a9a9;border-bottom:1px solid #5c5d5c}
.hl{display:flex;align-items:center;height:24px;padding:4px 0 0 6px}
.bigcube{width:22px;height:22px;margin:5px 15px 0 0}
.chk{width:12px;height:12px;border:1px solid #555;border-radius:2px;background:#a5a6a6;flex:none}
.chk svg{width:13px;height:13px;margin:-2px 0 0 -1px}
.field{height:16px;border:1px solid #777;border-top-color:#444;background:#a7a8a8;padding-left:3px;line-height:14px;display:flex;align-items:center;overflow:hidden}
.name{width:195px;margin:1px 5px 0 6px;padding-left:2px}
.static{margin:1px 0 0 4px}
.sdown{width:10px;height:6px;margin-left:4px}
.tl{display:flex;align-items:center;height:20px;padding:0 0 0 35px}
.lab{width:26px;flex:none}
.lab2{width:45px;padding-left:6px;flex:none}
.pop{height:15px;border:1px solid #595a59;border-radius:2px;background:linear-gradient(#b5b7b8,#999a9a);display:flex;align-items:center;padding:0 4px 0 5px;font-size:9.500px;flex:none}
.tag{width:116px}.lay{width:103px}
.ch{height:19px;display:flex;align-items:center;padding-left:4px}
.transform .ch{height:18px;padding-top:2px}
.transform{height:75px;border-bottom:1px dashed #555}
.script{height:181px;border-bottom:1px dashed #555}
.axis{width:14px;height:14px;margin:0 19px 0 3px}
.csh{width:14px;height:15px;margin:0 4px 0 3px}
.script .chk{margin-right:3px}
.book{width:13px;height:13px;margin:0 6px 0 auto}
.gear{width:14px;height:12px;margin-right:0}
.vec,.prop{height:16px;margin-bottom:2px;display:flex;align-items:center;padding-left:15px}
.pl{width:118px;overflow:hidden;flex:none}
.vec i{font-style:normal;width:12px;padding-left:1px;color:#333}
.vec .field{width:51px;margin-right:3px;padding-left:2px}
.prop .field{width:193px;padding-left:2px}
.prop .obj{width:175px}
.obj svg{width:12px;height:12px;margin-right:1px}
.obj{color:inherit}
.tg{width:9px;height:9px;margin-left:7px}
.add{width:230px;height:23px;margin:10px 0 0 47px;border:1px solid #4d4e4e;border-radius:3px;background:linear-gradient(#bfc2c4,#999a9a);text-align:center;font-size:12.500px;line-height:20px;letter-spacing:.1px;color:#222}

.status{height:21px;border-top:1px solid #6b6c6b}
.taskbar{height:40px;background:#0b0b0b;display:flex;color:#fff;font:12px/18px "Open Sans",sans-serif;letter-spacing:-.35px}
.app{width:49px;height:40px;display:flex;align-items:center;justify-content:center;flex:none}
.start{width:50px;padding-right:2px}
.run{background:linear-gradient(#999,#999) center bottom/40px 2px no-repeat}
.hot{background-color:#343334}
.run.hot{background-size:49px 2px}
.cur{background:#444344}
.epic{flex-direction:column;font:700 9px/9px "Liberation Sans",sans-serif}
.epic strong{transform:scale(.75,1.250);letter-spacing:0}
.epic small{font-size:4px;line-height:6px;letter-spacing:0}
.unitybox{width:19px;height:20px;background:#fff;color:#222;display:flex;align-items:center;justify-content:center}
.tray{display:flex;align-items:center;margin-left:auto;height:40px}
.t2{margin-left:18px}.t3{margin-left:19px}.t4{margin-left:15px}.t5{margin-left:17px}
.eng{width:24px;margin-left:14px}
.clock{width:56px;margin-left:14px;display:flex;flex-direction:column;text-align:center}
.t6{margin-left:18px}
.edge{width:5px;height:40px;border-left:1px solid #777;margin-left:19px}
```
